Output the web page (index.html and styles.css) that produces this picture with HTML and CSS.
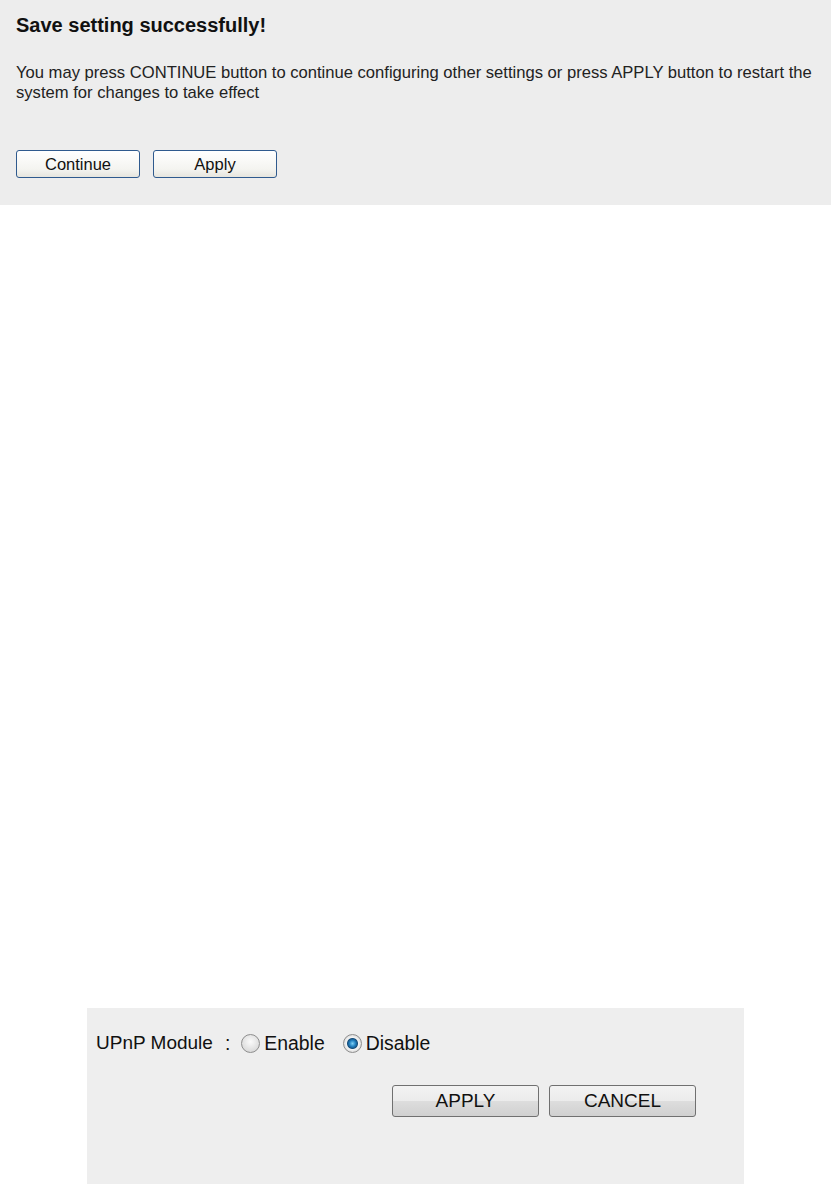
FILE: index.html
```html
<!DOCTYPE html>
<html>
<head>
    <meta charset="utf-8">
    <title>Save setting</title>
    <link rel="stylesheet" href="styles.css">
</head>
<body>
    <div class="notice">
        <h2>Save setting successfully!</h2>
        <p>You may press CONTINUE button to continue configuring other settings or press APPLY button to restart the system for changes to take effect</p>
        <div class="notice-btns">
            <button type="button" class="xp-btn">Continue</button>
            <button type="button" class="xp-btn">Apply</button>
        </div>
    </div>

    <div class="upnp">
        <div class="upnp-row">
            <span class="label">UPnP Module</span>
            <span class="colon">:</span>
            <label><input type="radio" name="upnp" value="1">Enable</label>
            <label><input type="radio" name="upnp" value="0" checked>Disable</label>
        </div>
        <div class="upnp-btns">
            <button type="button" class="vista-btn">APPLY</button>
            <button type="button" class="vista-btn">CANCEL</button>
        </div>
    </div>
</body>
</html>
```

FILE: styles.css
```css
html,
body {
    margin: 0;
    padding: 0;
    background: #fff;
}

body {
    font-family: "Liberation Sans", Arial, sans-serif;
    color: #000;
}

h2,
p {
    margin: 0;
    padding: 0;
}

/* top message box */
.notice {
    background: #ededed;
    height: 205px;
    padding: 13px 16px 0;
    box-sizing: border-box;
}

.notice h2 {
    font-size: 20px;
    font-weight: bold;
    line-height: 24px;
    color: #111;
}

.notice p {
    margin-top: 26px;
    font-size: 16.6px;
    line-height: 20px;
    color: #222;
}

.notice-btns {
    display: flex;
    gap: 13px;
    margin-top: 47px;
}

.xp-btn {
    width: 124px;
    height: 28px;
    padding: 0;
    font: 16.5px "Liberation Sans", Arial, sans-serif;
    color: #111;
    background: linear-gradient(#ffffff, #f4f4f0 70%, #e6e5de);
    border: 1px solid #2f5a8e;
    border-radius: 3px;
}

/* upnp box */
.upnp {
    background: #eeeeee;
    margin: 803px 0 0 87px;
    width: 657px;
    height: 190px;
    padding: 22px 9px 0;
    box-sizing: border-box;
}

.upnp-row {
    display: flex;
    align-items: center;
    font-size: 19.4px;
    line-height: 26px;
    color: #111;
}

.upnp-row .label {
    font-size: 19px;
}

.upnp-row .colon {
    margin: 0 11px 0 12px;
}

.upnp-row label {
    display: flex;
    align-items: center;
    margin-right: 18px;
}

.upnp-row input {
    appearance: none;
    -webkit-appearance: none;
    width: 19px;
    height: 19px;
    margin: 0 4px 0 0;
    border-radius: 50%;
    border: 1px solid #8e8e8e;
    background: radial-gradient(circle at 50% 40%, #fbfbfb, #dadada 75%);
    box-sizing: border-box;
}

.upnp-row input:checked {
    background: radial-gradient(circle, #7fd0f5 0, #2382c2 3px, #17507e 5px, #f4f4f4 6px, #dadada 9px);
}

.upnp-btns {
    display: flex;
    gap: 10px;
    margin: 29px 0 0 296px;
}

.vista-btn {
    width: 147px;
    height: 32px;
    padding: 0;
    font: 19px "Liberation Sans", Arial, sans-serif;
    color: #111;
    background: linear-gradient(#f3f3f3, #ebebeb 50%, #dddddd 51%, #d0d0d0);
    border: 1px solid #707070;
    border-radius: 3px;
}
```
